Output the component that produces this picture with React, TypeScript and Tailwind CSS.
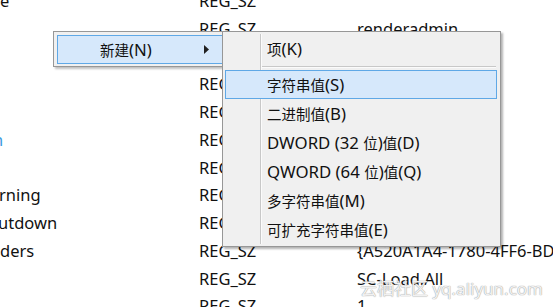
import React from "react";

const rows: { name?: string; nameCls?: string; type: string; data?: string }[] = [
  { name: "e", type: "REG_SZ" },
  { type: "REG_SZ", data: "renderadmin" },
  { type: "REG_SZ" },
  { type: "REG_SZ" },
  { type: "REG_SZ" },
  { name: "n", nameCls: "text-[#3b9be0] -ml-[7px]", type: "REG_SZ" },
  { type: "REG_SZ" },
  { name: "rning", nameCls: "-ml-[1px]", type: "REG_SZ" },
  { name: "utdown", nameCls: "-ml-[2px]", type: "REG_SZ" },
  { name: "ders", type: "REG_SZ", data: "{A520A1A4-1780-4FF6-BD18-167343C5AF16}" },
  { type: "REG_SZ", data: "SC-Load.All" },
  { type: "REG_SZ", data: "1" },
];

const subItems = [
  "字符串值(S)",
  "二进制值(B)",
  "DWORD (32 位)值(D)",
  "QWORD (64 位)值(Q)",
  "多字符串值(M)",
  "可扩充字符串值(E)",
];

// YaHei-like mix: Latin runs a bit larger than the CJK ones
function Label({ text }: { text: string }) {
  const parts = text.match(/[\u4e00-\u9fff]+|[^\u4e00-\u9fff]+/g) || [];
  return (
    <span className="whitespace-pre">
      {parts.map((p, i) =>
        /[\u4e00-\u9fff]/.test(p) ? (
          <span key={i} className="text-[14.5px]">{p}</span>
        ) : (
          <span key={i} className="text-[16.8px]">{p}</span>
        )
      )}
    </span>
  );
}

export default function App() {
  return (
    <div
      className="relative w-[553px] h-[307px] overflow-hidden bg-white text-[16.5px] text-[#111]"
      style={{ fontFamily: '"Noto Sans", "Noto Sans CJK SC", sans-serif' }}
    >
      {/* registry value list behind the menu */}
      <div className="-mt-[12.8px] flex flex-col">
        {rows.map((r, i) => (
          <div key={i} className="flex h-[27.8px] items-center whitespace-nowrap">
            <div className="w-[199px] shrink-0">
              <span className={r.nameCls}>{r.name}</span>
            </div>
            <div className="w-[158px] shrink-0">{r.type}</div>
            <div>{r.data}</div>
          </div>
        ))}
      </div>

      {/* watermark */}
      <div className="absolute left-[360px] top-[276px] text-[17px] text-white/85 [text-shadow:0_0_1px_#a0a0a0,0_0_1px_#a0a0a0] whitespace-nowrap">
        云栖社区 yq.aliyun.com
      </div>

      {/* context menu: 新建 */}
      <div className="absolute left-[53px] top-[31px] w-[175px] border border-[#979797] bg-[#f0f0f0] pt-[3px] pb-[2px] px-[3px] shadow-[2px_2px_2px_rgba(0,0,0,0.25)]">
        <div className="flex h-[29px] items-center border border-[#5fa8e6] bg-[#d6e8fb] pl-[42px] pr-[14px]">
          <span className="flex-1"><Label text="新建(N)" /></span>
          <svg width="5" height="9" viewBox="0 0 5 9">
            <path d="M0 0 L5 4.5 L0 9 Z" fill="#202020" />
          </svg>
        </div>
      </div>

      {/* submenu */}
      <div className="absolute left-[222px] top-[31px] w-[279px] border border-[#979797] bg-[#f0f0f0] p-[2px] shadow-[2px_2px_2px_rgba(0,0,0,0.3)]">
        <div className="relative">
          <div className="absolute left-[35px] top-0 bottom-0 w-[2px] border-l border-[#c8c8c8] bg-white/70" />
          <div className="relative flex h-[29px] items-center pl-[42px]"><Label text="项(K)" /></div>
          <div className="relative flex h-[7px] items-center pl-[37px] pr-[2px]">
            <div className="h-[2px] w-full border-t border-[#c8c8c8] bg-white/70" />
          </div>
          {subItems.map((t, i) => (
            <div
              key={t}
              className={
                i === 0
                  ? "relative flex h-[29px] items-center border border-[#5fa8e6] bg-[#d6e8fb] pl-[41px] mr-[1px]"
                  : "relative flex h-[29px] items-center pl-[42px]"
              }
            >
              <Label text={t} />
            </div>
          ))}
        </div>
      </div>
    </div>
  );
}
